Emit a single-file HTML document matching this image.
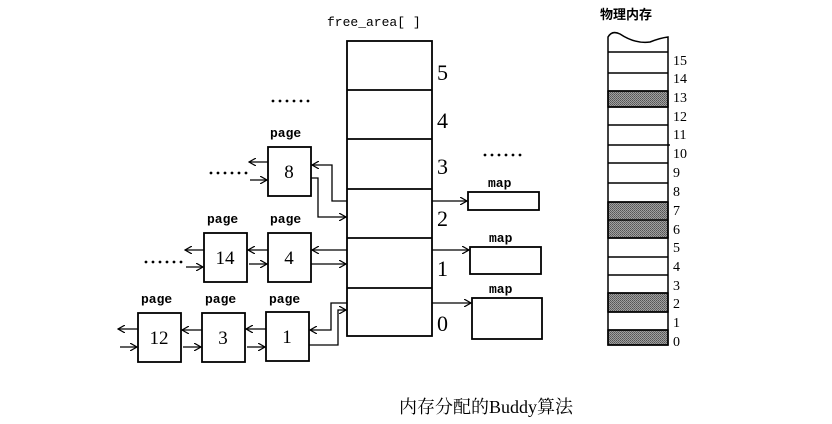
<!DOCTYPE html>
<html><head><meta charset="utf-8"><style>
html,body{margin:0;padding:0;background:#fff;width:832px;height:424px;overflow:hidden}
svg text{font-family:"Liberation Mono",monospace;fill:#000}
svg .s text{font-family:"Liberation Serif",serif}
svg text.cj{font-family:"Liberation Serif","Noto Serif CJK SC",serif}
svg text.cjb{font-family:"Liberation Sans","Noto Sans CJK SC",sans-serif;font-weight:bold}
</style></head><body>
<svg width="832" height="424" viewBox="0 0 832 424" xmlns="http://www.w3.org/2000/svg">
<defs>
<pattern id="g" width="2" height="2" patternUnits="userSpaceOnUse"><rect width="2" height="2" fill="#a0a0a0"/><rect width="1" height="1" fill="#555"/><rect x="1" y="1" width="1" height="1" fill="#666"/></pattern>
<marker id="a" markerWidth="8" markerHeight="8" refX="7" refY="4" orient="auto" markerUnits="userSpaceOnUse"><path d="M0,0 L7,4 L0,8" fill="none" stroke="#000" stroke-width="1.2"/></marker>
<g id="dots"><circle cx="0" cy="0" r="1.4"/><circle cx="7" cy="0" r="1.4"/><circle cx="14" cy="0" r="1.4"/><circle cx="21" cy="0" r="1.4"/><circle cx="28" cy="0" r="1.4"/><circle cx="35" cy="0" r="1.4"/></g>
</defs>
<g stroke="#000" stroke-width="1.8" fill="none">
<rect x="347" y="41" width="85" height="295"/>
<line x1="347" y1="90" x2="432" y2="90"/><line x1="347" y1="139" x2="432" y2="139"/><line x1="347" y1="189" x2="432" y2="189"/><line x1="347" y1="238" x2="432" y2="238"/><line x1="347" y1="288" x2="432" y2="288"/>
<rect x="468" y="192" width="71" height="18"/><rect x="470" y="247" width="71" height="27"/><rect x="472" y="298" width="70" height="41"/>
<rect x="268" y="147" width="43" height="49"/>
<rect x="268" y="233" width="43" height="49"/><rect x="204" y="233" width="43" height="49"/>
<rect x="266" y="312" width="43" height="49"/><rect x="202" y="313" width="43" height="49"/><rect x="138" y="313" width="43" height="49"/>
</g>
<g stroke="#000" stroke-width="1.3" fill="none" marker-end="url(#a)">
<line x1="432" y1="201" x2="467" y2="201"/><line x1="432" y1="250" x2="469" y2="250"/><line x1="432" y1="303" x2="471" y2="303"/>
<path d="M347,201 L332,201 L332,165 L312,165"/>
<path d="M311,178 L318,178 L318,217 L346,217"/>
<line x1="268" y1="162" x2="249" y2="162"/><line x1="250" y1="180" x2="267" y2="180"/>
<line x1="347" y1="250" x2="312" y2="250"/><line x1="311" y1="264" x2="346" y2="264"/>
<line x1="268" y1="250" x2="248" y2="250"/><line x1="249" y1="264" x2="267" y2="264"/>
<line x1="204" y1="250" x2="185" y2="250"/><line x1="186" y1="267" x2="203" y2="267"/>
<path d="M347,303 L331,303 L331,330 L310,330"/>
<path d="M309,345 L338,345 L338,310 L346,310"/>
<line x1="266" y1="329" x2="246" y2="329"/><line x1="247" y1="347" x2="265" y2="347"/>
<line x1="202" y1="330" x2="182" y2="330"/><line x1="183" y1="347" x2="201" y2="347"/>
<line x1="138" y1="329" x2="118" y2="329"/><line x1="120" y1="347" x2="137" y2="347"/>
</g>
<g stroke="#000" stroke-width="1.5">
<rect x="608" y="91" width="60" height="16" fill="url(#g)"/>
<rect x="608" y="202" width="60" height="36" fill="url(#g)"/>
<rect x="608" y="293" width="60" height="19" fill="url(#g)"/>
<rect x="608" y="330" width="60" height="15" fill="url(#g)"/>
<path d="M608,345 L608,37 Q612,30 620,34 Q635,44 650,42 Q660,38 668,37 L668,345 Z" fill="none"/>
<g fill="none">
<line x1="608" y1="52" x2="668" y2="52"/><line x1="608" y1="73" x2="668" y2="73"/><line x1="608" y1="91" x2="668" y2="91"/><line x1="608" y1="107" x2="668" y2="107"/><line x1="608" y1="125" x2="668" y2="125"/><line x1="608" y1="145" x2="670" y2="145"/><line x1="608" y1="163" x2="668" y2="163"/><line x1="608" y1="183" x2="668" y2="183"/><line x1="608" y1="202" x2="668" y2="202"/><line x1="608" y1="220" x2="668" y2="220"/><line x1="608" y1="238" x2="668" y2="238"/><line x1="608" y1="257" x2="668" y2="257"/><line x1="608" y1="275" x2="668" y2="275"/><line x1="608" y1="293" x2="668" y2="293"/><line x1="608" y1="312" x2="668" y2="312"/><line x1="608" y1="330" x2="668" y2="330"/>
</g></g>
<g class="s" font-size="14">
<text x="673" y="65">15</text><text x="673" y="83">14</text><text x="673" y="102">13</text><text x="673" y="121">12</text><text x="673" y="139">11</text><text x="673" y="158">10</text><text x="673" y="177">9</text><text x="673" y="196">8</text><text x="673" y="215">7</text><text x="673" y="234">6</text><text x="673" y="252">5</text><text x="673" y="271">4</text><text x="673" y="290">3</text><text x="673" y="308">2</text><text x="673" y="327">1</text><text x="673" y="346">0</text>
</g>
<text x="600" y="19" font-size="13" class="cjb">物理内存</text>
<text x="327" y="26" font-size="13">free_area[ ]</text>
<g class="s" font-size="22">
<text x="437" y="80">5</text><text x="437" y="128">4</text><text x="437" y="174">3</text><text x="437" y="226">2</text><text x="437" y="276">1</text><text x="437" y="331">0</text>
</g>
<g font-size="13" font-weight="bold">
<text x="488" y="187">map</text><text x="489" y="242">map</text><text x="489" y="293">map</text>
<text x="270" y="137">page</text><text x="207" y="223">page</text><text x="270" y="223">page</text>
<text x="141" y="303">page</text><text x="205" y="303">page</text><text x="269" y="303">page</text>
</g>
<g fill="#000">
<use href="#dots" x="273" y="101"/><use href="#dots" x="485" y="155"/><use href="#dots" x="211" y="173"/><use href="#dots" x="146" y="262"/>
</g>
<g class="s" font-size="19" text-anchor="middle">
<text x="289" y="178">8</text><text x="289" y="264">4</text><text x="225" y="264">14</text><text x="287" y="343">1</text><text x="223" y="344">3</text><text x="159" y="344">12</text>
</g>
<text x="399" y="413" font-size="18" class="cj">内存分配的Buddy算法</text>
</svg>
</body></html>
